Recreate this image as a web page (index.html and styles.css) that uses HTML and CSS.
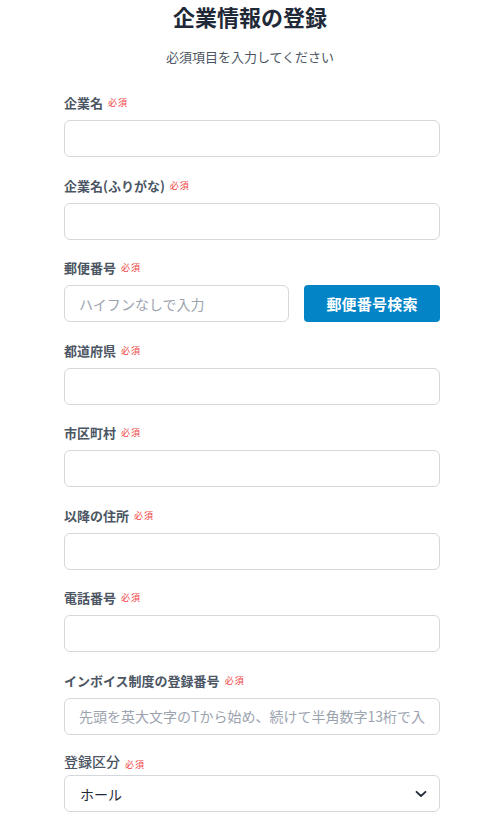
FILE: index.html
```html
<!DOCTYPE html>
<html lang="ja">
<head>
<meta charset="utf-8">
<link rel="stylesheet" href="styles.css">
</head>
<body>
<div class="page">
  <h1 class="title">企業情報の登録</h1>
  <p class="subtitle">必須項目を入力してください</p>
  <form class="form">
    <div class="field">
      <label class="label">企業名<span class="req">必須</span></label>
      <input class="input" type="text">
    </div>
    <div class="field">
      <label class="label">企業名(ふりがな)<span class="req">必須</span></label>
      <input class="input" type="text">
    </div>
    <div class="field">
      <label class="label">郵便番号<span class="req">必須</span></label>
      <div class="row">
        <input class="input postal" type="text" placeholder="ハイフンなしで入力">
        <button class="btn" type="button">郵便番号検索</button>
      </div>
    </div>
    <div class="field">
      <label class="label">都道府県<span class="req">必須</span></label>
      <input class="input" type="text">
    </div>
    <div class="field">
      <label class="label">市区町村<span class="req">必須</span></label>
      <input class="input" type="text">
    </div>
    <div class="field">
      <label class="label">以降の住所<span class="req">必須</span></label>
      <input class="input" type="text">
    </div>
    <div class="field">
      <label class="label">電話番号<span class="req">必須</span></label>
      <input class="input" type="text">
    </div>
    <div class="field">
      <label class="label">インボイス制度の登録番号<span class="req">必須</span></label>
      <input class="input" type="text" placeholder="先頭を英大文字のTから始め、続けて半角数字13桁で入力してください">
    </div>
    <div class="field last">
      <label class="label plain">登録区分<span class="req low">必須</span></label>
      <div class="select">
        <span>ホール</span>
        <svg width="12" height="8" viewBox="0 0 12 8"><path d="M1.5 1.8 L6 6 L10.5 1.8" fill="none" stroke="#1f2937" stroke-width="1.8" stroke-linecap="round" stroke-linejoin="round"/></svg>
      </div>
    </div>
  </form>
</div>
</body>
</html>
```

FILE: styles.css
```css
* { box-sizing: border-box; }
html, body { margin: 0; padding: 0; background: #fff; }
body {
  font-family: "Noto Sans CJK JP", "Noto Sans", sans-serif;
  color: #1f2937;
}
.page {
  width: 376px;
  margin-left: 64px;
  padding-top: 0;
}
.title {
  margin: 0;
  font-size: 22px;
  font-weight: 700;
  line-height: 32px;
  text-align: center;
  color: #1f2937;
  margin-left: -4px;
}
.subtitle {
  margin: 15px 0 0;
  font-size: 13px;
  line-height: 20px;
  text-align: center;
  color: #4b5563;
  margin-left: -4px;
}
.form {
  margin-top: 27px;
  display: flex;
  flex-direction: column;
  gap: 19.5px;
}
.field {
  display: flex;
  flex-direction: column;
  gap: 8px;
}
.label {
  font-size: 13px;
  font-weight: 700;
  line-height: 18px;
  color: #4b5563;
  display: flex;
  align-items: center;
}
.label.plain {
  font-weight: 500;
  font-size: 14px;
}
.req {
  color: #ef4444;
  font-size: 9px;
  font-weight: 400;
  margin-left: 5px;
  letter-spacing: 1px;
}
.req.low {
  position: relative;
  top: 4px;
}
.field.last { gap: 5px; margin-top: -2px; }
.input {
  width: 100%;
  height: 37px;
  border: 1px solid #d4d7dc;
  border-radius: 6px;
  padding: 0 14px;
  font-family: inherit;
  font-size: 14px;
  color: #1f2937;
  background: #fff;
  outline: none;
}
.input::placeholder { color: #9ca3af; }
.row {
  display: flex;
  gap: 15px;
}
.input.postal { width: 225px; flex: none; }
.btn {
  flex: 1;
  height: 37px;
  border: none;
  border-radius: 4px;
  background: #0284c7;
  color: #fff;
  font-family: inherit;
  font-size: 15px;
  font-weight: 700;
  letter-spacing: 0.2px;
}
.select {
  height: 37px;
  border: 1px solid #d4d7dc;
  border-radius: 6px;
  padding: 0 12px 0 15px;
  display: flex;
  align-items: center;
  justify-content: space-between;
  font-size: 14px;
  color: #1f2937;
}
```
